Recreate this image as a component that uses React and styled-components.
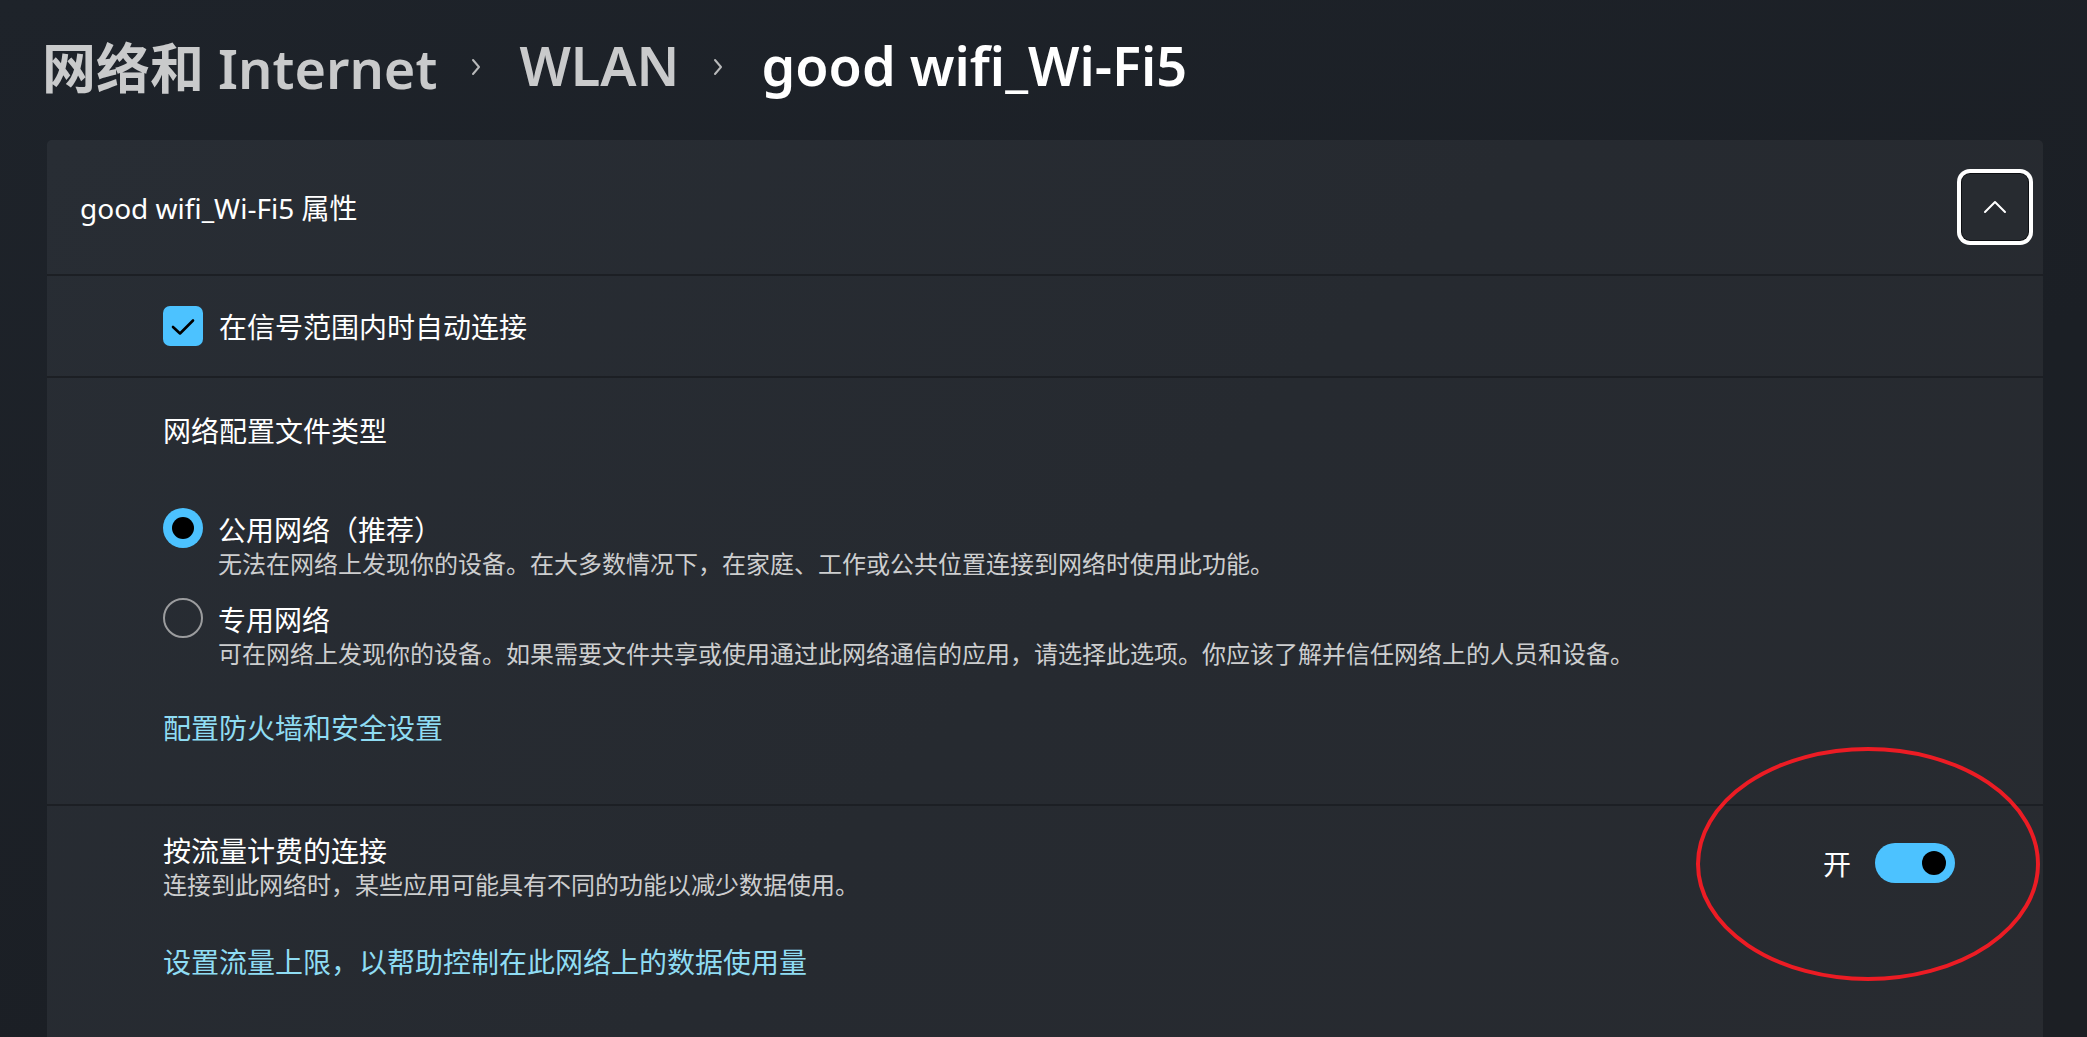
import React from "react";
import styled, { createGlobalStyle } from "styled-components";

const GlobalStyle = createGlobalStyle`
  html, body {
    margin: 0;
    padding: 0;
    height: 100%;
    overflow: hidden;
    background: #1c2026;
  }
  body {
    font-family: "Noto Sans", "Noto Sans CJK SC", sans-serif;
    color: #ffffff;
  }
`;

const Page = styled.div`
  box-sizing: border-box;
  height: 100vh;
  padding: 27px 44px 0 47px;
  background: linear-gradient(160deg, #1e232a 0%, #1b1f25 60%, #1c1f24 100%);
`;

const Breadcrumb = styled.nav`
  display: flex;
  align-items: center;
  height: 76px;
  margin-left: -5px;
  margin-bottom: 1px;
  font-family: "Noto Sans", "Noto Sans CJK SC", sans-serif;
  font-size: 54px;
  font-weight: 600;
`;

const Crumb = styled.span`
  color: ${(p) => (p.$current ? "#ffffff" : "#c9cacb")};
  white-space: nowrap;
`;

const Sep = styled.span`
  display: flex;
  align-items: center;
  padding: 4px 0 0 0;
  margin: 0 38px 0 34px;
  color: #b8b9ba;
`;

const Card = styled.section`
  margin-top: 37px;
  background: linear-gradient(135deg, #282d34 0%, #262a30 50%, #282b30 100%);
  border-radius: 5px 5px 0 0;
  min-height: 1000px;
`;

const CardHeader = styled.div`
  display: flex;
  align-items: center;
  justify-content: space-between;
  height: 134px;
  padding: 0 15px 0 33px;
  font-size: 28px;
`;

const HeaderTitle = styled.span`
  color: #ffffff;
`;

const CollapseButton = styled.button`
  width: 66px;
  height: 66px;
  border-radius: 8px;
  border: none;
  background: #272b30;
  box-shadow: 0 0 0 1px #0d0f12, 0 0 0 5px #ffffff;
  display: flex;
  align-items: center;
  justify-content: center;
  padding: 0;
`;

const Divider = styled.div`
  border-top: 2px solid #1c1f24;
`;

const CheckRow = styled.div`
  display: flex;
  align-items: center;
  gap: 16px;
  height: 100px;
  padding-left: 116px;
  font-size: 28px;
`;

const CheckBox = styled.span`
  width: 40px;
  height: 40px;
  border-radius: 7px;
  background: #4cc2ff;
  display: flex;
  align-items: center;
  justify-content: center;
  flex-shrink: 0;
`;

const Section = styled.div`
  padding: ${(p) => p.$pad};
  padding-left: 116px;
`;

const SectionTitle = styled.div`
  font-size: 28px;
  line-height: ${(p) => p.$lh || "40px"};
  color: #ffffff;
`;

const Description = styled.div`
  font-size: 24px;
  line-height: 32px;
  color: #cdcecf;
`;

const RadioGroup = styled.div`
  display: flex;
  flex-direction: column;
  gap: 22px;
  margin-top: 61px;
`;

const RadioOption = styled.label`
  display: flex;
  align-items: flex-start;
  gap: 15px;
`;

const RadioCircle = styled.span`
  box-sizing: border-box;
  width: 40px;
  height: 40px;
  margin-top: -4px;
  border-radius: 50%;
  flex-shrink: 0;
  display: flex;
  align-items: center;
  justify-content: center;
  background: ${(p) => (p.$checked ? "#4cc2ff" : "transparent")};
  border: ${(p) => (p.$checked ? "none" : "2px solid #9b9c9e")};
`;

const RadioDot = styled.span`
  width: 22px;
  height: 22px;
  border-radius: 50%;
  background: #000000;
`;

const OptionText = styled.div`
  display: flex;
  flex-direction: column;
`;

const Link = styled.a`
  display: block;
  font-size: 28px;
  line-height: 40px;
  color: #8fdcf3;
  text-decoration: none;
  margin-top: ${(p) => p.$mt};
`;

const SettingRow = styled.div`
  display: flex;
  align-items: center;
  justify-content: space-between;
  padding-right: 88px;
`;

const Control = styled.div`
  position: relative;
  display: flex;
  align-items: center;
  gap: 24px;
  margin-bottom: 8px;
  font-size: 28px;
`;

const Toggle = styled.span`
  box-sizing: border-box;
  width: 80px;
  height: 40px;
  border-radius: 20px;
  background: #4cc2ff;
  display: flex;
  align-items: center;
  justify-content: flex-end;
  padding-right: 9px;
`;

const Knob = styled.span`
  width: 24px;
  height: 24px;
  border-radius: 50%;
  background: #000000;
`;

const Annotation = styled.svg`
  position: absolute;
  left: -127px;
  top: -96px;
  pointer-events: none;
  overflow: visible;
`;

const Chevron = () => (
  <svg width="10" height="18" viewBox="0 0 10 18" fill="none">
    <polyline points="2,2 8,9 2,16" stroke="currentColor" strokeWidth="2" strokeLinecap="round" strokeLinejoin="round" />
  </svg>
);

export default function App() {
  return (
    <>
      <GlobalStyle />
      <Page>
        <Breadcrumb>
          <Crumb>网络和 Internet</Crumb>
          <Sep><Chevron /></Sep>
          <Crumb>WLAN</Crumb>
          <Sep><Chevron /></Sep>
          <Crumb $current>good wifi_Wi-Fi5</Crumb>
        </Breadcrumb>
        <Card>
          <CardHeader>
            <HeaderTitle>good wifi_Wi-Fi5 属性</HeaderTitle>
            <CollapseButton aria-label="折叠">
              <svg width="24" height="14" viewBox="0 0 24 14" fill="none">
                <polyline points="2,12 12,2 22,12" stroke="#ffffff" strokeWidth="2" strokeLinecap="round" strokeLinejoin="round" />
              </svg>
            </CollapseButton>
          </CardHeader>
          <Divider />
          <CheckRow>
            <CheckBox>
              <svg width="40" height="40" viewBox="0 0 40 40" fill="none">
                <polyline points="10,21 17,27.5 30,14.5" stroke="#000000" strokeWidth="2.6" strokeLinecap="round" strokeLinejoin="round" />
              </svg>
            </CheckBox>
            <span>在信号范围内时自动连接</span>
          </CheckRow>
          <Divider />
          <Section $pad="33px 0 56px 0">
            <SectionTitle>网络配置文件类型</SectionTitle>
            <RadioGroup>
              <RadioOption>
                <RadioCircle $checked><RadioDot /></RadioCircle>
                <OptionText>
                  <SectionTitle $lh="36px">公用网络（推荐）</SectionTitle>
                  <Description>无法在网络上发现你的设备。在大多数情况下，在家庭、工作或公共位置连接到网络时使用此功能。</Description>
                </OptionText>
              </RadioOption>
              <RadioOption>
                <RadioCircle />
                <OptionText>
                  <SectionTitle $lh="36px">专用网络</SectionTitle>
                  <Description>可在网络上发现你的设备。如果需要文件共享或使用通过此网络通信的应用，请选择此选项。你应该了解并信任网络上的人员和设备。</Description>
                </OptionText>
              </RadioOption>
            </RadioGroup>
            <Link $mt="38px">配置防火墙和安全设置</Link>
          </Section>
          <Divider />
          <Section $pad="27px 0 60px 0">
            <SettingRow>
              <div>
                <SectionTitle $lh="36px">按流量计费的连接</SectionTitle>
                <Description>连接到此网络时，某些应用可能具有不同的功能以减少数据使用。</Description>
              </div>
              <Control>
                <span>开</span>
                <Toggle><Knob /></Toggle>
                <Annotation width="344" height="234" viewBox="0 0 344 234">
                  <ellipse cx="172" cy="117" rx="170" ry="115" stroke="#ec1c24" strokeWidth="4" fill="none" />
                </Annotation>
              </Control>
            </SettingRow>
            <Link $mt="41px">设置流量上限，以帮助控制在此网络上的数据使用量</Link>
          </Section>
        </Card>
      </Page>
    </>
  );
}
